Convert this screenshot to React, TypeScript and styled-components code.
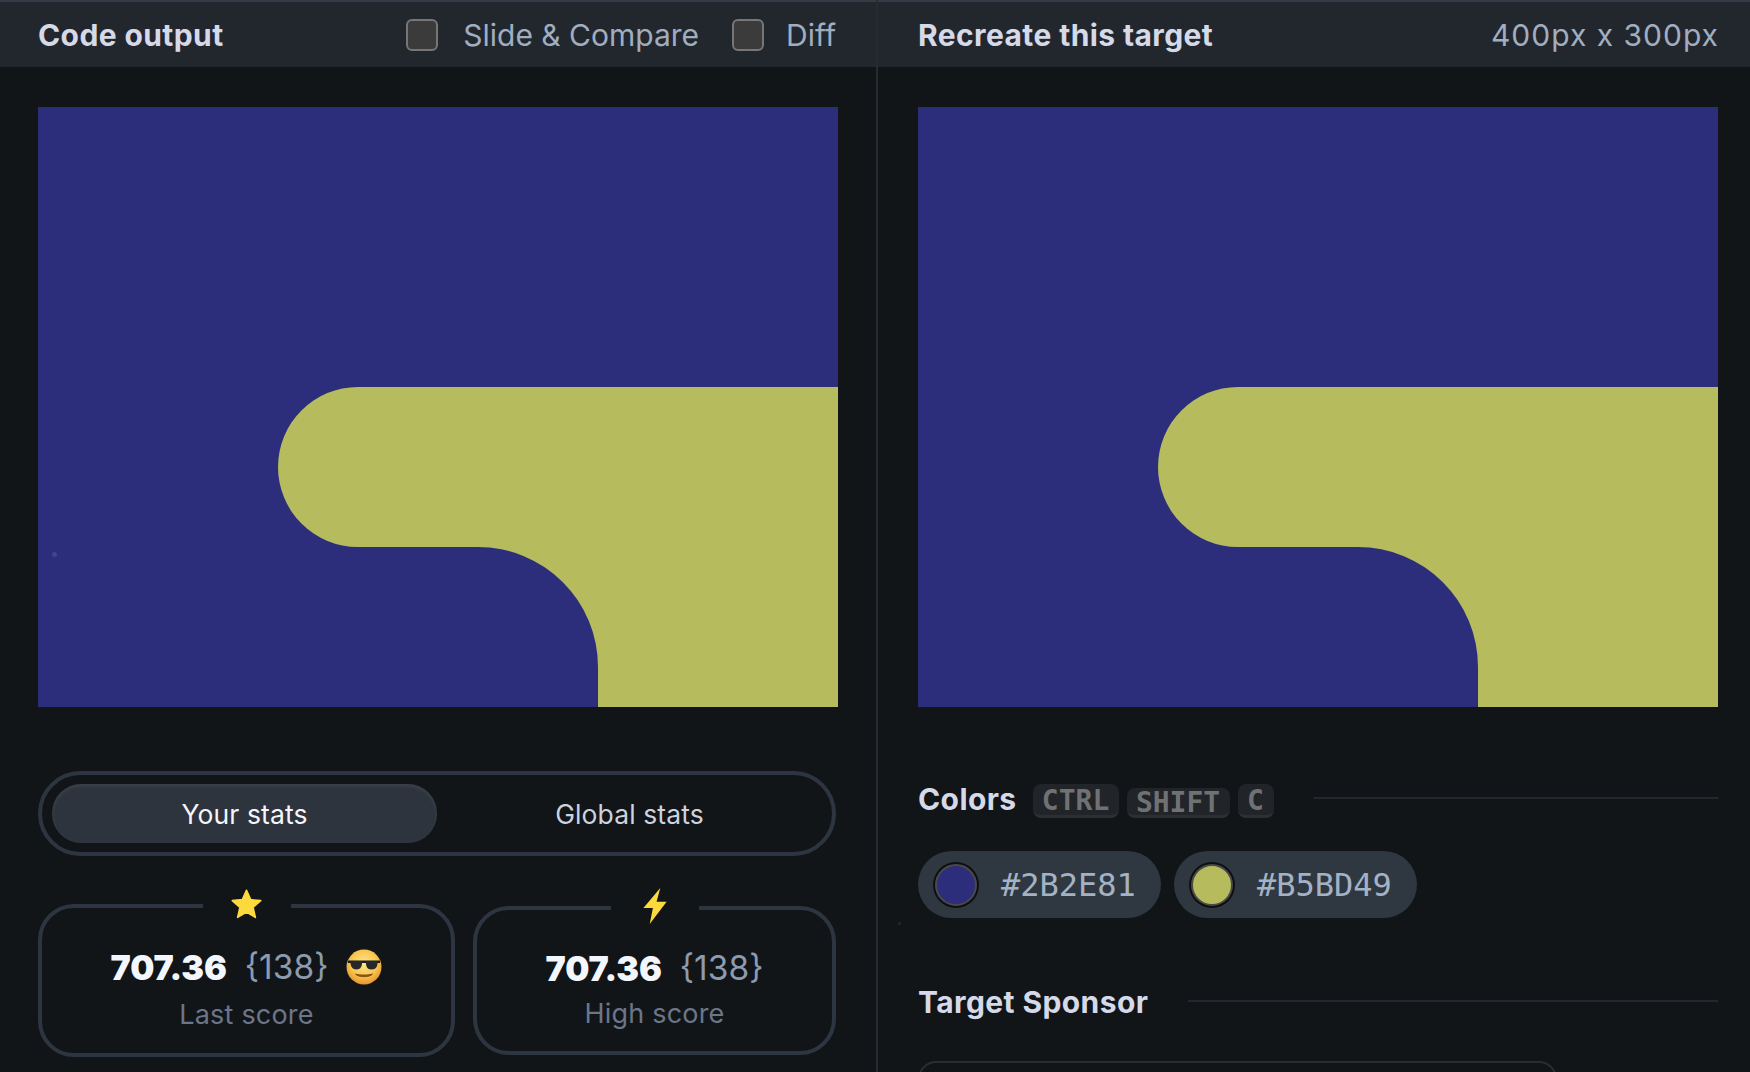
import React from 'react';
import styled, { createGlobalStyle } from 'styled-components';

const sans = '"Inter", "Liberation Sans", sans-serif';
const mono = '"DejaVu Sans Mono", "Liberation Mono", monospace';

const GlobalStyle = createGlobalStyle`
  html, body {
    margin: 0;
    padding: 0;
    background: #111518;
  }
  body {
    font-family: ${sans};
    -webkit-font-smoothing: antialiased;
  }
`;

const Page = styled.div`
  width: 1750px;
  height: 1072px;
  overflow: hidden;
  display: grid;
  grid-template-columns: 878px 872px;
  background: #111518;
`;

const Panel = styled.section<{ $divider?: boolean }>`
  position: relative;
  display: flex;
  flex-direction: column;
  box-sizing: border-box;
  height: 1072px;
  overflow: hidden;
  ${(p) => (p.$divider ? 'border-right: 2px solid #262b32;' : '')}

  & > * {
    flex: none;
  }
`;

const Header = styled.header<{ $right?: boolean }>`
  display: flex;
  align-items: center;
  box-sizing: border-box;
  height: 67px;
  padding: ${(p) => (p.$right ? '0 31px 0 40px' : '0 40px 0 38px')};
  border-top: 2px solid #333c46;
  background: #22272e;
`;

const Title = styled.h2`
  margin: 0;
  font-size: 30px;
  font-weight: 700;
  letter-spacing: 0.4px;
  color: #d5d9e8;
`;

const HeaderControls = styled.div`
  display: flex;
  align-items: center;
  margin-left: auto;
`;

const Check = styled.span<{ $gap?: number }>`
  box-sizing: border-box;
  width: 32px;
  height: 32px;
  margin-left: ${(p) => p.$gap ?? 0}px;
  border: 2px solid #767676;
  border-radius: 6px;
  background: #3b3b3b;
`;

const CheckLabel = styled.span<{ $gap: number }>`
  margin-left: ${(p) => p.$gap}px;
  font-size: 30px;
  color: #a0aec0;
`;

const Size = styled.span`
  margin-left: auto;
  font-size: 30px;
  letter-spacing: 1px;
  color: #a0aec0;
`;

const Canvas = styled.div<{ $right?: boolean }>`
  position: relative;
  width: 800px;
  height: 600px;
  margin: 40px 0 0 ${(p) => (p.$right ? 40 : 38)}px;

  svg {
    display: block;
  }
`;

const CanvasSpeck = styled.span`
  position: absolute;
  left: 14px;
  top: 445px;
  width: 5px;
  height: 5px;
  border-radius: 50%;
  background: #41448c;
`;

const PanelSpeck = styled.span`
  position: absolute;
  left: 20px;
  top: 922px;
  width: 3px;
  height: 3px;
  border-radius: 50%;
  background: #24282c;
`;

const Tabs = styled.div`
  display: flex;
  box-sizing: border-box;
  width: 798px;
  height: 85px;
  margin: 64px 0 0 38px;
  padding: 9px 10px;
  border: 4px solid #2d3640;
  border-radius: 43px;
`;

const Tab = styled.div<{ $active?: boolean }>`
  display: flex;
  align-items: center;
  justify-content: center;
  flex: ${(p) => (p.$active ? '0 0 385px' : '1')};
  height: 59px;
  border-radius: 29px;
  font-size: 26.5px;
  letter-spacing: 0.1px;
  color: ${(p) => (p.$active ? '#f4f6fb' : '#cbd3de')};
  background: ${(p) => (p.$active ? '#2e343d' : 'transparent')};
  box-shadow: ${(p) => (p.$active ? 'inset 0 2px 4px rgba(255,255,255,0.08)' : 'none')};
`;

const StatsRow = styled.div`
  display: flex;
  align-items: flex-start;
  gap: 18px;
  margin: 48px 0 0 38px;
`;

const StatCard = styled.div<{ $w: number; $h: number; $top?: number; $padTop: number; $labelTop: number }>`
  position: relative;
  display: flex;
  flex-direction: column;
  align-items: center;
  box-sizing: border-box;
  width: ${(p) => p.$w}px;
  height: ${(p) => p.$h}px;
  margin-top: ${(p) => p.$top ?? 0}px;
  padding-top: ${(p) => p.$padTop}px;
  border: 4px solid #2d3640;
  border-radius: 36px;

  p {
    margin: ${(p) => p.$labelTop}px 0 0;
    font-size: 27px;
    line-height: 32px;
    letter-spacing: 0.2px;
    color: #6b7688;
  }
`;

const StatBadge = styled.span`
  position: absolute;
  top: -22px;
  left: 50%;
  display: flex;
  align-items: center;
  justify-content: center;
  width: 88px;
  height: 36px;
  margin-left: -44px;
  background: #111518;
`;

const ScoreLine = styled.div`
  display: flex;
  align-items: center;
  gap: 18px;
  height: 40px;
`;

const Score = styled.strong`
  font-size: 34px;
  font-weight: 900;
  letter-spacing: -0.1px;
  color: #f4f6fd;
`;

const Match = styled.span`
  font-size: 33.5px;
  color: #8d9bb0;
`;

const SectionRow = styled.div<{ $top: number }>`
  display: flex;
  align-items: flex-start;
  margin: ${(p) => p.$top}px 32px 0 40px;

  &::after {
    content: '';
    flex: 1;
    height: 2px;
    margin: 13px 0 0 40px;
    background: #23272e;
  }
`;

const SectionTitle = styled.h3`
  margin: 0;
  font-size: 30px;
  line-height: 30px;
  font-weight: 700;
  letter-spacing: 0.4px;
  color: #d5d9e8;
`;

const Keys = styled.div`
  display: flex;
  align-items: flex-end;
  gap: 8px;
  height: 34px;
  margin-left: 16px;
`;

const Key = styled.kbd<{ $w: number; $short?: boolean }>`
  display: flex;
  align-items: center;
  justify-content: center;
  box-sizing: border-box;
  width: ${(p) => p.$w}px;
  height: ${(p) => (p.$short ? 30 : 34)}px;
  padding-top: 2px;
  border-bottom: 3px solid #2c2f34;
  border-radius: 8px;
  background: #212429;
  font-family: ${mono};
  font-size: 28px;
  font-weight: 700;
  color: #707172;
`;

const Swatches = styled.div`
  display: flex;
  gap: 13px;
  margin: 33px 0 0 40px;
`;

const Swatch = styled.div`
  display: flex;
  align-items: center;
  gap: 22px;
  box-sizing: border-box;
  width: 243px;
  height: 67px;
  padding-left: 15px;
  border-radius: 34px;
  background: #2f3840;
  font-family: ${mono};
  font-size: 32px;
  color: #a4b2c5;
`;

const Dot = styled.span<{ $color: string }>`
  box-sizing: border-box;
  width: 42px;
  height: 42px;
  margin: 0 2px;
  border: 2px solid #4a4a4a;
  border-radius: 50%;
  background: ${(p) => p.$color};
  box-shadow: 0 0 0 2px #0e0f11;
`;

const SponsorCard = styled.div`
  box-sizing: border-box;
  width: 639px;
  height: 120px;
  margin: 44px 0 0 40px;
  border: 2px solid #2a2c30;
  border-radius: 18px;
`;

const TargetShape = () => (
  <svg width="800" height="600" viewBox="0 0 800 600">
    <rect width="800" height="600" fill="#2C2E7B" />
    <path
      d="M800 280H320a80 80 0 0 0 0 160H440a120 120 0 0 1 120 120V600H800Z"
      fill="#B6BC5E"
    />
  </svg>
);

const StarIcon = () => (
  <svg width="35" height="35" viewBox="0 0 32 32">
    <path
      d="M16 3l3.800 8.600 9.200.9-7 6.100 2.100 9.200L16 22.900l-8.100 4.900L10 18.600 3 12.500l9.200-.9z"
      fill="#fcd93d"
      stroke="#fcd93d"
      strokeWidth="1.500"
      strokeLinejoin="round"
    />
  </svg>
);

const BoltIcon = () => (
  <svg width="26" height="38" viewBox="0 0 24 36">
    <path d="M17 1L1 20h9L7 35 23 14H13.500z" fill="#fcd93d" />
  </svg>
);

const CoolFace = () => (
  <svg width="36" height="36" viewBox="0 0 36 36">
    <defs>
      <radialGradient id="face" cx="50%" cy="40%" r="62%">
        <stop offset="0%" stopColor="#fde58a" />
        <stop offset="60%" stopColor="#f9c64f" />
        <stop offset="100%" stopColor="#e58f2a" />
      </radialGradient>
    </defs>
    <circle cx="18" cy="18" r="17.500" fill="url(#face)" />
    <path d="M2 11.500h32v2.500H2z" fill="#1d1d20" />
    <path d="M4.500 12h11.500c.4 5-1.500 8.500-5.500 8.500S4 17 4.500 12z" fill="#26262b" />
    <path d="M20 12h11.500c.5 5-1.500 8.500-6 8.500S19.600 17 20 12z" fill="#26262b" />
    <path
      d="M9.500 25c2.500 3.600 14.500 3.600 17 0-3 1.400-14 1.400-17 0z"
      fill="#8a5212"
      stroke="#8a5212"
      strokeLinejoin="round"
    />
  </svg>
);

export default function App() {
  return (
    <>
      <GlobalStyle />
      <Page>
        <Panel $divider>
          <Header>
            <Title>Code output</Title>
            <HeaderControls>
              <Check />
              <CheckLabel $gap={25}>Slide &amp; Compare</CheckLabel>
              <Check $gap={33} />
              <CheckLabel $gap={22}>Diff</CheckLabel>
            </HeaderControls>
          </Header>
          <Canvas>
            <TargetShape />
            <CanvasSpeck />
          </Canvas>
          <Tabs>
            <Tab $active>Your stats</Tab>
            <Tab>Global stats</Tab>
          </Tabs>
          <StatsRow>
            <StatCard $w={417} $h={153} $padTop={39} $labelTop={12}>
              <StatBadge>
                <StarIcon />
              </StatBadge>
              <ScoreLine>
                <Score>707.36</Score>
                <Match>{'{138}'}</Match>
                <CoolFace />
              </ScoreLine>
              <p>Last score</p>
            </StatCard>
            <StatCard $w={363} $h={149} $top={2} $padTop={38} $labelTop={10}>
              <StatBadge>
                <BoltIcon />
              </StatBadge>
              <ScoreLine>
                <Score>707.36</Score>
                <Match>{'{138}'}</Match>
              </ScoreLine>
              <p>High score</p>
            </StatCard>
          </StatsRow>
        </Panel>
        <Panel>
          <Header $right>
            <Title>Recreate this target</Title>
            <Size>400px x 300px</Size>
          </Header>
          <Canvas $right>
            <TargetShape />
          </Canvas>
          <SectionRow $top={77}>
            <SectionTitle>Colors</SectionTitle>
            <Keys>
              <Key $w={86}>CTRL</Key>
              <Key $w={103} $short>SHIFT</Key>
              <Key $w={36}>C</Key>
            </Keys>
          </SectionRow>
          <Swatches>
            <Swatch>
              <Dot $color="#2C2E7B" />
              #2B2E81
            </Swatch>
            <Swatch>
              <Dot $color="#B6BC5E" />
              #B5BD49
            </Swatch>
          </Swatches>
          <SectionRow $top={69}>
            <SectionTitle>Target Sponsor</SectionTitle>
          </SectionRow>
          <SponsorCard />
          <PanelSpeck />
        </Panel>
      </Page>
    </>
  );
}
